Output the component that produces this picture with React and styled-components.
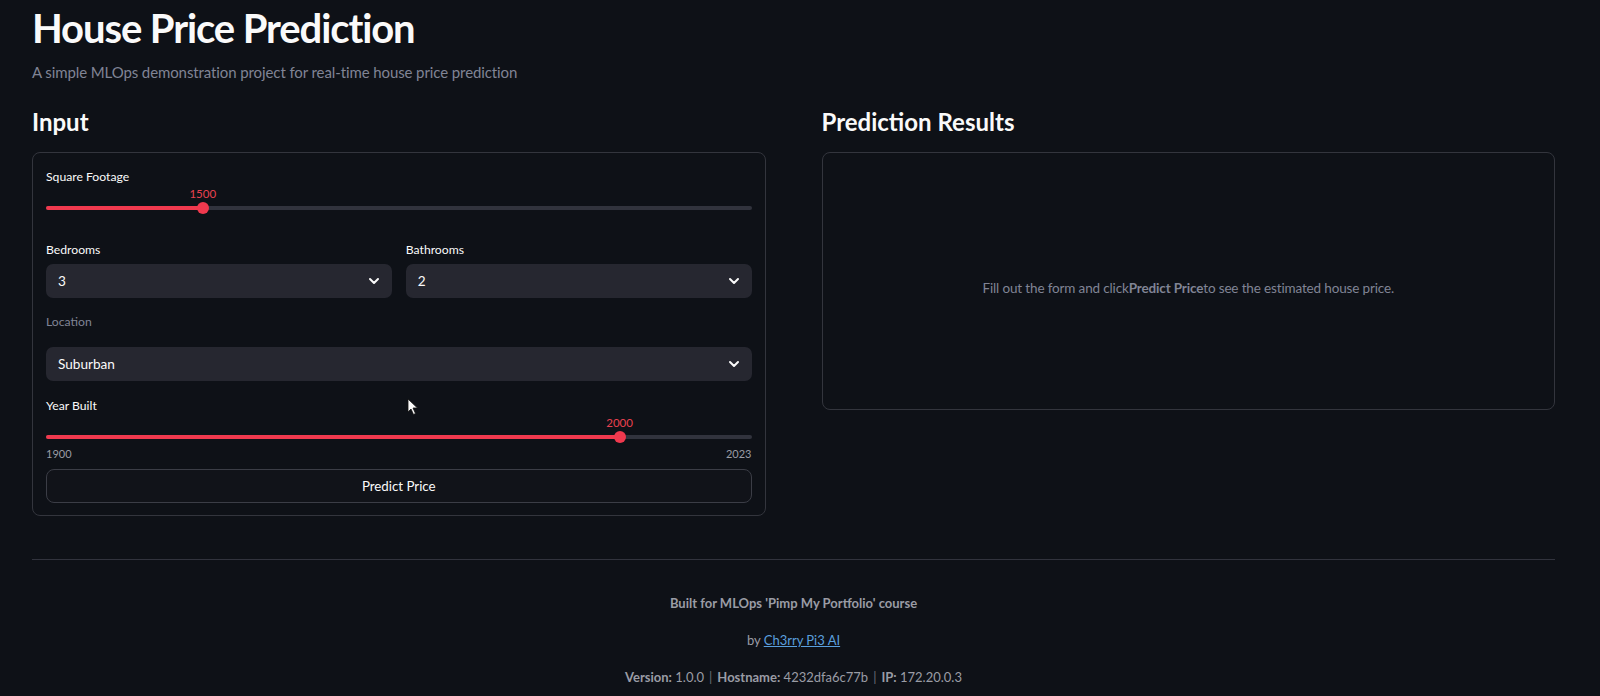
import React from "react";
import styled, { createGlobalStyle } from "styled-components";
import { ChevronDown } from "lucide-react";

const GlobalStyle = createGlobalStyle`
  html, body {
    margin: 0;
    padding: 0;
    background: #0e1117;
    color: #fafafa;
    font-family: "Lato", "Noto Sans", sans-serif;
  }
  * { box-sizing: border-box; }
`;

const Page = styled.div`
  position: relative;
  min-height: 696px;
  padding: 0 45px 0 32px;
`;

const Title = styled.h1`
  margin: 0;
  padding-top: 6px;
  font-size: 40px;
  line-height: 44px;
  font-weight: 700;
  letter-spacing: -1.1px;
`;

const Subtitle = styled.p`
  margin: 12px 0 0;
  font-size: 15px;
  line-height: 20px;
  color: #808495;
  letter-spacing: -0.1px;
`;

const Columns = styled.div`
  display: grid;
  grid-template-columns: 1fr 1fr;
  gap: 56px;
  margin-top: 24px;
`;

const Column = styled.section`
  display: flex;
  flex-direction: column;
`;

const Heading = styled.h3`
  margin: 0 0 14px;
  font-size: 24px;
  line-height: 32px;
  font-weight: 700;
`;

const Card = styled.div`
  border: 1px solid #33353d;
  border-radius: 8px;
  padding: 14px 13px 12px;
  display: flex;
  flex-direction: column;
`;

const ResultCard = styled(Card)`
  height: 258px;
  align-items: center;
  justify-content: center;
  padding-top: 26px;
  padding-bottom: 12px;
`;

const Hint = styled.p`
  margin: 0;
  font-size: 13.5px;
  letter-spacing: -0.15px;
  color: #808495;
  b { font-weight: 700; }
`;

const Label = styled.div`
  font-size: 12.2px;
  line-height: 20px;
  color: ${p => (p.muted ? "#808495" : "#fafafa")};
  margin-bottom: ${p => p.gap || 0}px;
`;

const SliderWrap = styled.div`
  position: relative;
  height: 28px;
`;

const Track = styled.div`
  position: absolute;
  left: 0;
  right: 0;
  top: 19px;
  height: 4px;
  border-radius: 2px;
  background: #31333d;
`;

const Fill = styled.div`
  height: 100%;
  border-radius: 2px;
  background: #f0394e;
`;

const Thumb = styled.div`
  position: absolute;
  top: 15px;
  width: 12px;
  height: 12px;
  margin-left: -6px;
  border-radius: 50%;
  background: #f0394e;
`;

const ThumbValue = styled.div`
  position: absolute;
  top: 0;
  transform: translateX(-50%);
  font-size: 11.5px;
  line-height: 14px;
  color: #e8414f;
`;

const Ticks = styled.div`
  display: flex;
  justify-content: space-between;
  font-size: 11px;
  line-height: 16px;
  color: #9a9ca5;
  margin-top: 2px;
`;

const Row = styled.div`
  display: grid;
  grid-template-columns: 1fr 1fr;
  gap: 14px;
  margin-top: ${p => p.top || 0}px;
`;

const Field = styled.div`
  display: flex;
  flex-direction: column;
  margin-top: ${p => p.top || 0}px;
`;

const Select = styled.div`
  height: 34px;
  border-radius: 7px;
  background: #262730;
  display: flex;
  align-items: center;
  justify-content: space-between;
  padding: 0 10px 0 12px;
  font-size: 13.6px;
  color: #fafafa;
`;

const Button = styled.button`
  margin-top: 7px;
  height: 34px;
  width: 100%;
  border: 1px solid #3b3d46;
  border-radius: 8px;
  background: #111319;
  color: #fafafa;
  font-family: inherit;
  font-size: 13.3px;
`;

const Divider = styled.hr`
  margin: 43px 0 0;
  border: none;
  border-top: 1px solid #31333d;
`;

const Footer = styled.footer`
  display: flex;
  flex-direction: column;
  align-items: center;
  font-size: 13px;
  color: #9a9ca5;
  padding-top: 33px;
  gap: 17px;
  line-height: 20px;
`;

const Strong = styled.span`
  font-weight: 700;
`;

const Link = styled.a`
  color: #5a9fdd;
  text-decoration: underline;
`;

const Sep = styled.span`
  margin: 0 5px;
  color: #6b6d76;
`;

const Cursor = styled.svg`
  position: absolute;
  left: 407px;
  top: 398px;
`;

const Slider = ({ min, max, value, showTicks }) => {
  const pct = ((value - min) / (max - min)) * 100;
  return (
    <>
      <SliderWrap>
        <ThumbValue style={{ left: `${pct}%` }}>{value}</ThumbValue>
        <Track>
          <Fill style={{ width: `${pct}%` }} />
        </Track>
        <Thumb style={{ left: `${pct}%` }} />
      </SliderWrap>
      {showTicks && (
        <Ticks>
          <span>{min}</span>
          <span>{max}</span>
        </Ticks>
      )}
    </>
  );
};

const Dropdown = ({ value }) => (
  <Select>
    <span>{value}</span>
    <ChevronDown size={16} strokeWidth={3} color="#fafafa" />
  </Select>
);

const App = () => {
  return (
    <Page>
      <GlobalStyle />
      <Title>House Price Prediction</Title>
      <Subtitle>A simple MLOps demonstration project for real-time house price prediction</Subtitle>
      <Columns>
        <Column>
          <Heading>Input</Heading>
          <Card>
            <Label>Square Footage</Label>
            <Slider min={500} max={5000} value={1500} />
            <Row top={25}>
              <Field>
                <Label gap={4}>Bedrooms</Label>
                <Dropdown value="3" />
              </Field>
              <Field>
                <Label gap={4}>Bathrooms</Label>
                <Dropdown value="2" />
              </Field>
            </Row>
            <Field top={14}>
              <Label muted gap={15}>Location</Label>
              <Dropdown value="Suburban" />
            </Field>
            <Field top={15}>
              <Label>Year Built</Label>
              <Slider min={1900} max={2023} value={2000} showTicks />
            </Field>
            <Button>Predict Price</Button>
          </Card>
        </Column>
        <Column>
          <Heading>Prediction Results</Heading>
          <ResultCard>
            <Hint>
              Fill out the form and click<b>Predict Price</b>to see the estimated house price.
            </Hint>
          </ResultCard>
        </Column>
      </Columns>
      <Divider />
      <Footer>
        <Strong>Built for MLOps 'Pimp My Portfolio' course</Strong>
        <div>
          by <Link href="#">Ch3rry Pi3 AI</Link>
        </div>
        <div>
          <Strong>Version:</Strong> 1.0.0<Sep>|</Sep>
          <Strong>Hostname:</Strong> 4232dfa6c77b<Sep>|</Sep>
          <Strong>IP:</Strong> 172.20.0.3
        </div>
      </Footer>
      <Cursor width="12" height="18" viewBox="0 0 12 18">
        <path d="M1 1 L1 14 L4 11 L6.5 16.5 L8.5 15.5 L6 10 L10.5 10 Z" fill="#fafafa" stroke="#111" strokeWidth="0.8" />
      </Cursor>
    </Page>
  );
};

export default App;
